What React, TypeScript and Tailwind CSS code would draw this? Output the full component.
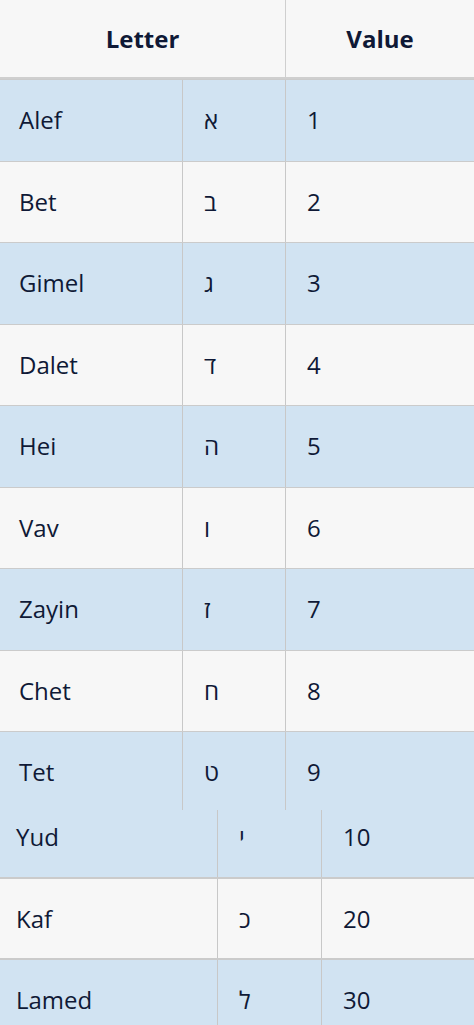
const top = [
  ['Alef', 'א', '1'],
  ['Bet', 'ב', '2'],
  ['Gimel', 'ג', '3'],
  ['Dalet', 'ד', '4'],
  ['Hei', 'ה', '5'],
  ['Vav', 'ו', '6'],
  ['Zayin', 'ז', '7'],
  ['Chet', 'ח', '8'],
  ['Tet', 'ט', '9'],
];

const bottom = [
  ['Yud', 'י', '10'],
  ['Kaf', 'כ', '20'],
  ['Lamed', 'ל', '30'],
];

export default function App() {
  return (
    <div
      className="h-[1025px] w-[474px] overflow-hidden bg-white text-[24px] text-[#0f1936]"
      style={{ fontFamily: '"Open Sans", "DejaVu Sans", sans-serif' }}
    >
      {/* first table, cut after Tet */}
      <div className="h-[810px] overflow-hidden">
        <div className="flex h-[79px] border-b-2 border-[#cfcfcf] bg-[#f7f7f7] font-bold">
          <div className="flex w-[285px] items-center justify-center">Letter</div>
          <div className="flex flex-1 items-center justify-center border-l border-[#cfcfcf]">Value</div>
        </div>
        {top.map(([name, glyph, value], i) => (
          <div
            key={name}
            className={`flex h-[81.5px] border-t border-[#cbcbcb] ${i % 2 === 0 ? 'bg-[#d1e3f2]' : 'bg-[#f7f7f7]'}`}
          >
            <div className="flex w-[182px] items-center pl-[19px]">{name}</div>
            <div className="flex w-[103px] items-center border-l border-[#c8c8c8] pl-[21px]">{glyph}</div>
            <div className="flex flex-1 items-center border-l border-[#c8c8c8] pl-[21px]">{value}</div>
          </div>
        ))}
      </div>

      {/* second table, scrolled in slightly */}
      <div className="h-[215px] overflow-hidden">
        <div className="-mt-[14px]">
          {bottom.map(([name, glyph, value], i) => (
            <div
              key={name}
              className={`flex h-[81px] ${i > 0 ? 'border-t-2 border-[#cbcbcb]' : ''} ${i % 2 === 0 ? 'bg-[#d1e3f2]' : 'bg-[#f7f7f7]'}`}
            >
              <div className="flex w-[217px] items-center pl-4">{name}</div>
              <div className="flex w-[104px] items-center border-l border-[#c8c8c8] pl-[21px]">{glyph}</div>
              <div className="flex flex-1 items-center border-l border-[#c8c8c8] pl-[21px]">{value}</div>
            </div>
          ))}
        </div>
      </div>
    </div>
  );
}
